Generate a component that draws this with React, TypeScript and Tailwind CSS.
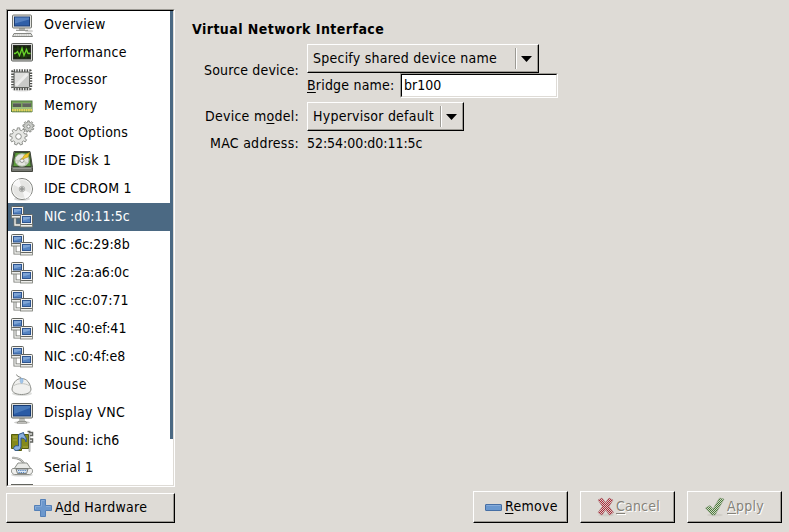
import React from "react";

type Kind =
  | "computer" | "perf" | "cpu" | "memory" | "gears" | "disk" | "cd"
  | "nic" | "mouse" | "display" | "sound" | "serial" | "partial";

function Gear({ cx, cy, r, n, fill, hole }: { cx: number; cy: number; r: number; n: number; fill: string; hole: number }) {
  const points: string[] = [];
  for (let i = 0; i < n; i++) {
    [[-0.3, 0.76], [-0.2, 1], [0.2, 1], [0.3, 0.76]].forEach(([o, k]) => {
      const a = ((i + o) / n) * 2 * Math.PI - Math.PI / 2;
      points.push(`${(cx + Math.cos(a) * r * k).toFixed(2)},${(cy + Math.sin(a) * r * k).toFixed(2)}`);
    });
  }
  return (
    <g stroke="#858782" strokeWidth=".9" strokeLinejoin="round">
      <polygon points={points.join(" ")} fill={fill} />
      <circle cx={cx} cy={cy} r={hole} fill="#fff" />
    </g>
  );
}

function Icon({ kind }: { kind: Kind }) {
  return (
    <svg width="24" height="24" viewBox="0 0 24 24" className="block shrink-0 overflow-visible">
      {kind === "computer" && (
        <g>
          <ellipse cx="19" cy="18" rx="4" ry="1.6" fill="#d5d5d3" />
          <path d="M9 15h6v2.500H9z" fill="#b5b7b3" />
          <rect x="2.500" y="2" width="19" height="13" rx="1" fill="#e4e5e1" stroke="#73756f" />
          <rect x="4.500" y="4" width="15" height="9" fill="#2f5fa8" stroke="#1c3d73" />
          <path d="M5 4.500h14v2L5 10.500z" fill="#5681c0" />
          <path d="M6 17.300h12" stroke="#858782" />
          <path d="M4 20.500h17l1.500 3h-20z" fill="#eeeeec" stroke="#858782" />
          <path d="M4.500 22h16" stroke="#b1b3af" strokeDasharray="1.500 .7" />
        </g>
      )}
      {kind === "perf" && (
        <g>
          <rect x="1.500" y="3.500" width="21" height="17.500" rx="1" fill="#d8dad5" stroke="#555753" />
          <rect x="3.500" y="5.500" width="17" height="13.500" fill="#15220c" stroke="#292b27" />
          <path d="M4 9h16M4 12.500h16M4 16h16M8 6v12.500M12 6v12.500M16 6v12.500" stroke="#2d5414" strokeWidth=".6" />
          <path d="M4 13.500h1.500l2-2 2 4L12 8.500l2 7 2.500-6 1.500 4h2.500" fill="none" stroke="#68d32a" strokeWidth="1.300" />
        </g>
      )}
      {kind === "cpu" && (
        <g>
          <ellipse cx="12" cy="21.500" rx="10" ry="2" fill="#e6e6e5" />
          <rect x="2.700" y="2.700" width="18" height="18" rx="1" fill="none" stroke="#4c4e4a" strokeWidth="3" strokeDasharray="1.400 1.200" />
          <rect x="4" y="4" width="15.500" height="15.500" rx="1" fill="#c9cac8" stroke="#5f615d" />
          <path d="M5 5h13.500L5 18.500z" fill="#dededc" />
          <path d="M6 17.500L17.500 6" stroke="#ececeb" strokeWidth="3" />
        </g>
      )}
      {kind === "memory" && (
        <g>
          <rect x="1.500" y="7" width="20.500" height="10.500" fill="#79a65c" stroke="#53793e" />
          <rect x="3" y="9" width="8" height="4" fill="#565a55" />
          <rect x="12.500" y="9" width="8.500" height="4" fill="#60645d" />
          <path d="M3 9.500h8M12.500 9.500h8" stroke="#858b80" strokeWidth=".7" />
          <path d="M2 14h20" stroke="#c5d69c" />
          <path d="M2 16.200h20" stroke="#e9d45c" strokeWidth="2.500" strokeDasharray="1.700 .6" />
          <path d="M2 18h20" stroke="#6c9158" strokeWidth=".7" />
        </g>
      )}
      {kind === "gears" && (
        <g>
          <Gear cx={8.5} cy={15.5} r={8.7} n={9} fill="#e6e7e4" hole={2.8} />
          <Gear cx={18.500} cy={5.500} r={5.700} n={9} fill="#c9cbc7" hole={1.600} />
        </g>
      )}
      {kind === "disk" && (
        <g>
          <path d="M4 2.500h16l2.500 16v4h-21v-4z" fill="#73766f" stroke="#44473f" />
          <path d="M5 3.500h14.500l1.700 14H2.800z" fill="#5b9b3a" stroke="#354c29" />
          <ellipse cx="12" cy="11" rx="7" ry="6.300" fill="#e4e7e0" stroke="#a5b09d" />
          <path d="M5.500 10.500l5 1-3 4zM14 12l4.500 1.500-3 3z" fill="#c7cdc0" />
          <circle cx="12" cy="11.500" r="2" fill="#f5f5f5" stroke="#858782" strokeWidth=".8" />
          <path d="M11.500 10.500l3-4.500 5-2.500-1.500 4.500z" fill="#efc62e" stroke="#bb931c" strokeWidth=".6" />
          <path d="M3 19.500h18" stroke="#989b95" />
        </g>
      )}
      {kind === "cd" && (
        <g>
          <ellipse cx="12" cy="22" rx="8" ry="1.800" fill="#ddd" />
          <circle cx="12" cy="12" r="10.500" fill="#e5e5e3" stroke="#7d7f7a" />
          <path d="M12 12L3 7.500A10 10 0 0 1 9 2zM12 12l9 4.500a10 10 0 0 1-6 5.500z" fill="#f7f7f7" />
          <circle cx="12" cy="12" r="9.500" fill="none" stroke="#fff" strokeWidth=".7" />
          <circle cx="12" cy="12" r="2.800" fill="#dcdddb" stroke="#a3a5a1" strokeWidth=".8" />
          <circle cx="12" cy="12" r="1.200" fill="#fff" stroke="#555753" strokeWidth=".9" />
        </g>
      )}
      {kind === "nic" && (
        <g>
          <path d="M5 13v7h6" fill="none" stroke="#73756f" strokeWidth="3" />
          <path d="M5 13v7h6" fill="none" stroke="#f2f2f0" strokeWidth="1.300" />
          <rect x="1.500" y="10.500" width="10" height="2.500" fill="#eeeeec" stroke="#73756f" strokeWidth=".8" />
          <rect x="1.500" y="1.500" width="12" height="9" rx="1" fill="#f2f2f0" stroke="#62645f" />
          <rect x="3.500" y="3.500" width="8" height="5.500" fill="#5584c2" stroke="#2e5590" />
          <path d="M4 4h7v1.500l-7 2z" fill="#7fa5d6" />
          <rect x="10.500" y="19.500" width="12" height="2.500" fill="#eeeeec" stroke="#73756f" strokeWidth=".8" />
          <rect x="10.500" y="9.500" width="12" height="10" rx="1" fill="#f2f2f0" stroke="#62645f" />
          <rect x="12.500" y="11.500" width="8" height="6" fill="#5584c2" stroke="#2e5590" />
          <path d="M13 12h7v1.500l-7 2z" fill="#7fa5d6" />
        </g>
      )}
      {kind === "mouse" && (
        <g>
          <ellipse cx="12" cy="20.500" rx="10" ry="2.500" fill="#dddedc" />
          <path d="M11.500 6.500V5.500C11.500 3.500 7 4.500 6.500 1.500" fill="none" stroke="#858782" />
          <path d="M2 16C3 10 6 5.500 11.500 5.500S20 10 21 16c0 3.500-4 5.500-9.500 5.500S2 19.500 2 16z" fill="#f0f0ee" stroke="#8d8f8a" />
          <path d="M4 12.500c4-2.500 11-2.500 15 0" fill="none" stroke="#c2c4c0" />
          <path d="M10.200 5.500h2.800v3.500l-1.400 1.500L10.200 9z" fill="#a3c7ea" stroke="#80a7d1" strokeWidth=".5" />
        </g>
      )}
      {kind === "display" && (
        <g>
          <ellipse cx="12" cy="21.500" rx="8" ry="1.500" fill="#cfcfcd" />
          <path d="M9.500 17h5l1 4h-7z" fill="#bcbeb9" />
          <rect x="1.500" y="2.500" width="21" height="14.500" rx="1" fill="#dedfdb" stroke="#62645f" />
          <rect x="3.500" y="4.500" width="17" height="10.500" fill="#2a5ba5" stroke="#183b72" />
          <path d="M4 5h16v2L4 13z" fill="#4878b8" />
          <path d="M8 20.500h8l1 1.500H7z" fill="#e4e5e1" stroke="#858782" strokeWidth=".8" />
        </g>
      )}
      {kind === "sound" && (
        <g>
          <path d="M1.500 5.500h17v14h-7v2h-6v-2h-4z" fill="#858a1b" stroke="#565c0b" />
          <path d="M3 8h4M3 11h4M13 18h5" stroke="#aaa943" />
          <path d="M17.500 2.500h3M19.500 2.500v20M20 3.500h2.500v3h-2.500M20 10h2.500v3h-2.500" fill="none" stroke="#62645f" strokeWidth="1.500" />
          <path d="M19.500 4v18" stroke="#e6e7e3" strokeWidth=".7" />
          <path d="M8.500 17V5.500l5-2c.5 4 4 4.500 2.500 9.500-.5-3-2-4-5-4v8.500c0 2.500-2 4-4.500 4S3 19.500 4 18s3-1.500 4.500-1z" fill="#8bb1df" stroke="#2d558b" />
        </g>
      )}
      {kind === "serial" && (
        <g transform="translate(0 -1.500)">
          <ellipse cx="12" cy="20.500" rx="11" ry="1.600" fill="#d5d6d4" />
          <path d="M2 3.500c6-.5 9 1 12 5.500" fill="none" stroke="#8d8f8a" strokeWidth="2.200" />
          <path d="M2 3.500c6-.5 9 1 12 5.500" fill="none" stroke="#e6e6e2" strokeWidth=".8" />
          <path d="M8 8.500h9l4 6H4z" fill="#e9eae7" stroke="#8d8f8a" />
          <path d="M2.500 14h19c2 2 1 5.500-2 6h-15c-3-.5-4-4-2-6z" fill="#efefed" stroke="#8d8f8a" />
          <path d="M6 14.500h12l-1.500 4.500h-9z" fill="#dce7f3" stroke="#666862" strokeWidth=".8" />
          <path d="M8 16h9M8.500 18h7" stroke="#5a87bd" strokeWidth="1.100" strokeDasharray="1.300 .9" />
        </g>
      )}
      {kind === "partial" && <rect x="1.500" y="1.500" width="21" height="18" fill="#d0d1ce" stroke="#62645f" />}
    </svg>
  );
}

const rows: { label: string; kind: Kind; h: string; text: string; selected?: boolean }[] = [
  { label: "Overview", kind: "computer", h: "h-[27px]", text: "pb-px tracking-[0.3px]" },
  { label: "Performance", kind: "perf", h: "h-[28px]", text: "tracking-[0.27px]" },
  { label: "Processor", kind: "cpu", h: "h-[27px]", text: "pb-px tracking-[0.3px]" },
  { label: "Memory", kind: "memory", h: "h-[25px]", text: "pb-px tracking-[0.4px]" },
  { label: "Boot Options", kind: "gears", h: "h-[29px]", text: "pb-px tracking-[0.2px]" },
  { label: "IDE Disk 1", kind: "disk", h: "h-[28px]", text: "pb-[2px] tracking-[0.3px]" },
  { label: "IDE CDROM 1", kind: "cd", h: "h-[28px]", text: "pb-[2px] tracking-[0.2px]" },
  { label: "NIC :d0:11:5c", kind: "nic", h: "h-[28px]", text: "pb-[2px]", selected: true },
  { label: "NIC :6c:29:8b", kind: "nic", h: "h-[28px]", text: "pb-[2px]" },
  { label: "NIC :2a:a6:0c", kind: "nic", h: "h-[28px]", text: "pb-[2px]" },
  { label: "NIC :cc:07:71", kind: "nic", h: "h-[28px]", text: "pb-[2px]" },
  { label: "NIC :40:ef:41", kind: "nic", h: "h-[28px]", text: "pb-[2px]" },
  { label: "NIC :c0:4f:e8", kind: "nic", h: "h-[28px]", text: "pb-[2px]" },
  { label: "Mouse", kind: "mouse", h: "h-[28px]", text: "pb-[2px] tracking-[0.4px]" },
  { label: "Display VNC", kind: "display", h: "h-[28px]", text: "pb-[2px] tracking-[0.35px]" },
  { label: "Sound: ich6", kind: "sound", h: "h-[28px]", text: "pb-[2px] tracking-[0.1px]" },
  { label: "Serial 1", kind: "serial", h: "h-[26px]", text: "pb-[2px] tracking-[0.2px]" },
  { label: "", kind: "partial", h: "h-[28px]", text: "" },
];

const raised =
  "flex items-center border border-t-white border-l-white border-r-black border-b-black shadow-[inset_-1px_-1px_0_#9c9a94] whitespace-nowrap";

function Key({ children }: { children: React.ReactNode }) {
  return <span className="underline decoration-1 underline-offset-2">{children}</span>;
}

function Combo({ label, size }: { label: string; size: string }) {
  return (
    <button className={`${raised} ${size} pl-[5px] pr-[6px] tracking-[0.24px]`}>
      <span>{label}</span>
      <span className="ml-auto mr-[4px] h-[21px] w-[2px] border-l border-l-[#9c9a94] border-r border-r-white" />
      <svg width="11" height="6" viewBox="0 0 11 6"><path d="M0 0h11L5.500 6z" fill="#000" /></svg>
    </button>
  );
}

function DisabledMark({ kind }: { kind: "x" | "check" }) {
  return (
    <svg width="20" height="20" viewBox="0 0 20 20" className="shrink-0">
      <defs>
        <pattern id={`dots-${kind}`} width="2" height="2" patternUnits="userSpaceOnUse">
          <rect width="2" height="2" fill={kind === "x" ? "#dcc6c3" : "#d0d6c8"} />
          <path d="M0 0h1v1H0zM1 1h1v1H1z" fill={kind === "x" ? "#a82c3a" : "#4a7a38"} />
        </pattern>
      </defs>
      <ellipse cx="10" cy="18" rx="8" ry="1.500" fill="#d0cdc7" />
      {kind === "x" ? (
        <path d="M2 3l4-2 3.500 4.500L13 1l4 2-4 6.500 4.500 6-4 2.500-4-5-3.500 5-4-2.500 4.500-6z" fill="url(#dots-x)" stroke="#a8646a" strokeWidth=".5" />
      ) : (
        <path d="M.500 11l4.500-2.500 3 3.500L14.500 1l4.500 1L10 18H7z" fill="url(#dots-check)" stroke="#7d9572" strokeWidth=".5" />
      )}
    </svg>
  );
}

export default function App() {
  return (
    <div className="flex h-[532px] w-[789px] overflow-hidden bg-[#dedbd6] pl-[6px] pt-[9px] font-['DejaVu_Sans_Condensed','DejaVu_Sans',sans-serif] text-[14px] leading-[17px] text-black [font-stretch:condensed]">
      <aside className="w-[169px] shrink-0">
        <div className="h-[478px] border border-t-[#9c9a94] border-l-[#9c9a94] border-r-white border-b-white">
          <div className="flex h-full overflow-hidden border border-t-black border-l-black border-r-[#dedbd6] border-b-[#dedbd6] bg-white">
            <ul className="w-[162px] shrink-0">
              {rows.map((r, i) => (
                <li key={i} className={`flex items-center gap-[10px] whitespace-nowrap pl-[2px] ${r.h} ${r.selected ? "bg-[#4b6983] text-white" : ""}`}>
                  <Icon kind={r.kind} />
                  <span className={r.text}>{r.label}</span>
                </li>
              ))}
            </ul>
            <div className="h-[428px] w-[3px] bg-[#4b6983]" />
          </div>
        </div>
        <button className={`${raised} mt-[6px] h-[30px] w-[169px] pl-[27px]`}>
          <svg width="19" height="19" viewBox="0 0 19 19" className="mr-[2px]">
            <path d="M6.500.5h5v6h6v5h-6v6h-5v-6h-6v-5h6z" fill="#6c98cd" stroke="#5480b7" />
            <path d="M7.500 7.500v-6h3M1.500 10v-2.500h5M12 7.500h4.500" fill="none" stroke="#86abd9" />
          </svg>
          <span className="pb-[2px] tracking-[0.25px]">A<Key>d</Key>d Hardware</span>
        </button>
      </aside>

      <main className="flex w-[614px] flex-col pl-[17px]">
        <h2 className="mt-[12px] font-bold tracking-[0.45px]">Virtual Network Interface</h2>
        <div className="mt-[6px] flex">
          <div className="w-[107px] pt-[18px] text-right tracking-[0.15px]">Source device:</div>
          <div className="ml-[8px]">
            <Combo label="Specify shared device name" size="h-[29px] w-[232px]" />
            <div className="flex w-[251px] items-center">
              <span className="tracking-[0.2px]">
                <Key>B</Key>ridge name:
              </span>
              <div className="ml-auto w-[158px] border border-t-[#9c9a94] border-l-[#9c9a94] border-r-white border-b-white">
                <div className="h-[23px] border border-t-black border-l-black border-r-[#dedbd6] border-b-[#dedbd6] bg-white pl-[2px] pt-[2px]">br100</div>
              </div>
            </div>
          </div>
        </div>
        <div className="mt-[4px] flex items-center">
          <div className="w-[107px] text-right tracking-[0.27px]">Device m<Key>o</Key>del:</div>
          <div className="ml-[8px]"><Combo label="Hypervisor default" size="h-[29px] w-[157px]" /></div>
        </div>
        <div className="mt-[4px] flex">
          <div className="w-[107px] text-right tracking-[0.27px]">MAC address:</div>
          <div className="ml-[8px] tracking-[-0.05px]">52:54:00:d0:11:5c</div>
        </div>
        <footer className="mb-[9px] mt-auto flex justify-end gap-[12px] pr-[7px]">
          <button className={`${raised} h-[32px] w-[95px] pl-[11px] tracking-[0.3px]`}>
            <svg width="17" height="7" viewBox="0 0 17 7" className="mr-[3px]">
              <rect x=".5" y=".5" width="16" height="6" rx=".5" fill="#6a98cf" stroke="#466fa5" />
              <path d="M1.500 1.500h14" stroke="#86abd9" />
            </svg>
            <span className="pb-px"><Key>R</Key>emove</span>
          </button>
          <button className={`${raised} h-[32px] w-[95px] pl-[15px] tracking-[0.2px] text-[#858279] [text-shadow:1px_1px_0_#fff]`}>
            <DisabledMark kind="x" /><span className="pb-px"><Key>C</Key>ancel</span>
          </button>
          <button className={`${raised} h-[32px] w-[95px] pl-[17px] tracking-[0.3px] text-[#858279] [text-shadow:1px_1px_0_#fff]`}>
            <DisabledMark kind="check" /><span className="ml-[2px] pb-px"><Key>A</Key>pply</span>
          </button>
        </footer>
      </main>
    </div>
  );
}
